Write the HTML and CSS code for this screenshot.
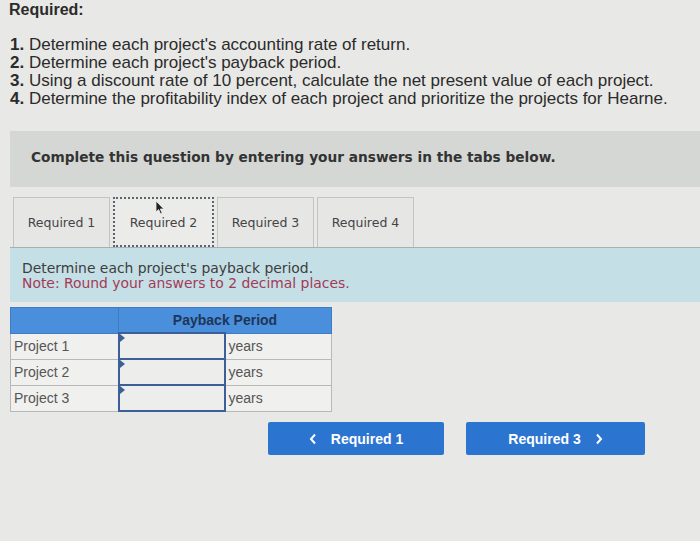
FILE: index.html
```html
<!DOCTYPE html>
<html lang="en">
<head>
  <meta charset="UTF-8" />
  <title>Required - Payback Period</title>
  <link rel="stylesheet" href="styles.css">
</head>
<body>

  <h1 class="req-title">Required:</h1>

  <ol class="req-list">
    <li><b>1.</b> Determine each project's accounting rate of return.</li>
    <li><b>2.</b> Determine each project's payback period.</li>
    <li><b>3.</b> Using a discount rate of 10 percent, calculate the net present value of each project.</li>
    <li><b>4.</b> Determine the profitability index of each project and prioritize the projects for Hearne.</li>
  </ol>

  <div class="instructions">Complete this question by entering your answers in the tabs below.</div>

  <div class="tabs">
    <div class="tab">Required 1</div>
    <div class="tab active">Required 2
      <svg class="cursor" width="10" height="15" viewBox="0 0 10 15">
        <path d="M1 1 L1 12 L3.6 9.6 L5.6 14 L7.2 13.2 L5.3 9 L8.8 9 Z" fill="#222" stroke="#eee" stroke-width="0.8"/>
      </svg>
    </div>
    <div class="tab">Required 3</div>
    <div class="tab">Required 4</div>
  </div>

  <div class="panel">
    <p>Determine each project's payback period.</p>
    <p class="note">Note: Round your answers to 2 decimal places.</p>
  </div>

  <table class="answers">
    <tr class="head">
      <th></th>
      <th colspan="2">Payback Period</th>
    </tr>
    <tr>
      <td class="label">Project 1</td>
      <td class="entry"><span class="flag"></span></td>
      <td class="unit">years</td>
    </tr>
    <tr>
      <td class="label">Project 2</td>
      <td class="entry"><span class="flag"></span></td>
      <td class="unit">years</td>
    </tr>
    <tr>
      <td class="label">Project 3</td>
      <td class="entry"><span class="flag"></span></td>
      <td class="unit">years</td>
    </tr>
  </table>

  <div class="nav">
    <button class="nav-btn prev">
      <svg class="chev" width="8" height="12" viewBox="0 0 8 12"><path d="M6 1.5 L2 6 L6 10.5" fill="none" stroke="#fff" stroke-width="2"/></svg>
      Required 1
    </button>
    <button class="nav-btn next">
      Required 3
      <svg class="chev" width="8" height="12" viewBox="0 0 8 12"><path d="M2 1.5 L6 6 L2 10.5" fill="none" stroke="#fff" stroke-width="2"/></svg>
    </button>
  </div>

</body>
</html>
```

FILE: styles.css
```css
body {
  margin: 0;
  background: #e8e8e6;
  color: #2b2b2b;
  font-family: 'Liberation Sans', Arial, sans-serif;
  height: 541px;
  overflow: hidden;
}
.req-title {
  margin: 0;
  padding: 1px 0 0 9px;
  font-size: 16px;
  line-height: 18px;
  font-weight: bold;
}
.req-list {
  list-style: none;
  margin: 17px 0 0 10px;
  padding: 0;
  font-size: 17px;
  line-height: 18px;
}
.instructions {
  margin: 23px 0 0 10px;
  height: 56px;
  background: #d4d7d3;
  padding-left: 21px;
  font-family: 'DejaVu Sans', Verdana, sans-serif;
  font-weight: bold;
  font-size: 13.7px;
  line-height: 52px;
  color: #333;
  box-sizing: border-box;
}
.tabs {
  display: flex;
  margin: 10px 0 0 13px;
  gap: 3px;
  height: 50px;
}
.tab {
  position: relative;
  width: 97px;
  border: 1px solid #c4c4c2;
  border-bottom: none;
  background: #e6e6e4;
  font-family: 'DejaVu Sans', Verdana, sans-serif;
  font-size: 12.5px;
  color: #444;
  display: flex;
  align-items: center;
  justify-content: center;
  box-sizing: border-box;
}
.tab.active {
  width: 101px;
  background: #ebebea;
  border: 2px dotted #5c6370;
}
.cursor {
  position: absolute;
  left: 40px;
  top: 1px;
}
.panel {
  margin-left: 10px;
  height: 55px;
  background: #c5dfe6;
  border-top: 1px solid #a7afb3;
  padding: 13px 0 0 12px;
  box-sizing: border-box;
  font-family: 'DejaVu Sans', Verdana, sans-serif;
  font-size: 13.9px;
  line-height: 15px;
  color: #3d3d3d;
}
.panel p {
  margin: 0;
}
.panel .note {
  color: #a33a55;
}
.answers {
  margin: 5px 0 0 10px;
  border-collapse: collapse;
  font-size: 14px;
  color: #555;
}
.answers th {
  background: #4a8fdb;
  height: 24px;
  padding: 0;
  color: #1f3558;
  font-weight: bold;
  border: 1px solid #3f7cc4;
}
.answers td {
  height: 26px;
  padding: 0 3px;
  box-sizing: border-box;
  border: 1px solid #b8b8b8;
  background: #f0f0ee;
}
.answers .label {
  width: 108px;
}
.answers .entry {
  position: relative;
  width: 106px;
  border: 2px solid #3d5f98;
  background: #ededeb;
}
.answers .unit {
  width: 107px;
}
.flag {
  position: absolute;
  left: 0;
  top: 0;
  width: 0;
  height: 0;
  border-top: 4px solid transparent;
  border-bottom: 4px solid transparent;
  border-left: 5px solid #3d5f98;
}
.nav {
  display: flex;
  gap: 22px;
  margin: 10px 0 0 268px;
}
.nav-btn {
  height: 33px;
  border: none;
  border-radius: 2px;
  background: #2b75d1;
  color: #fff;
  font-family: 'Liberation Sans', Arial, sans-serif;
  font-weight: bold;
  font-size: 14px;
  display: flex;
  align-items: center;
  justify-content: center;
  gap: 14px;
}
.nav-btn.prev {
  width: 176px;
}
.nav-btn.next {
  width: 179px;
}
```
